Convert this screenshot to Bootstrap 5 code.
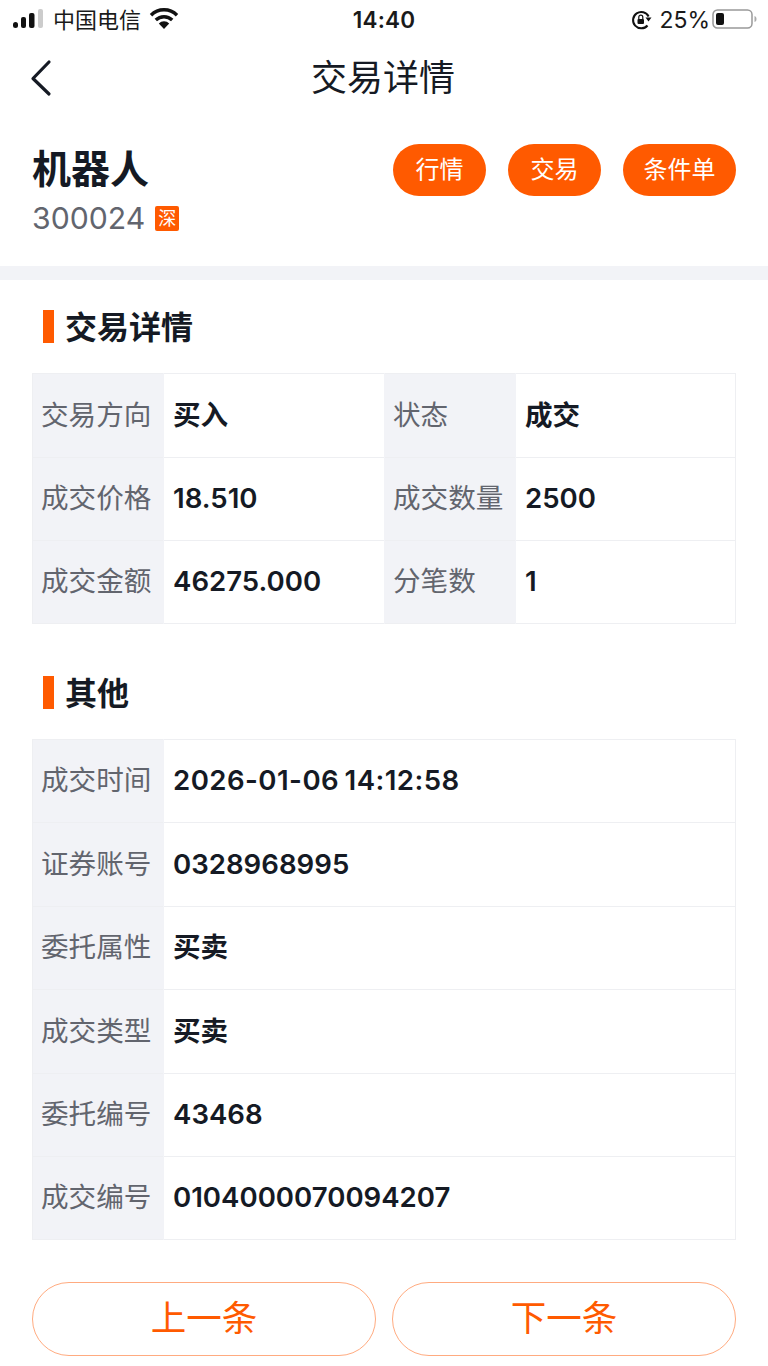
<!DOCTYPE html>
<html lang="zh-CN">
<head>
    <meta charset="UTF-8">
    <meta name="viewport" content="width=device-width, initial-scale=1.0">
    <title>交易详情</title>
    <link href="https://cdn.jsdelivr.net/npm/bootstrap@5.3.0/dist/css/bootstrap.min.css" rel="stylesheet">
    <style>
        body {
            font-family: "Inter", "Noto Sans CJK SC", sans-serif;
            background-color: #fff;
            color: #151a24;
            width: 768px;
            height: 1366px;
            overflow: hidden;
        }
        .status-bar { height: 40px; padding: 0 11px 0 13px; font-size: 22px; color: #1a1a1a; }
        .status-side { width: 260px; }
        .status-time { font-size: 22.5px; font-weight: 600; letter-spacing: .2px; margin-right: 2px; }
        .status-pct { font-size: 23px; margin-left: 7px; margin-right: 2px; }
        .status-up { margin-bottom: 3px; }
        .top-nav { height: 76px; }
        .top-title { font-size: 36px; line-height: 76px; font-weight: 400; margin: 0; padding-right: 2px; }
        .back-btn { left: 29px; top: 19px; }
        .stock-head { height: 150px; padding: 24px 32px 0 32px; }
        .stock-name { font-size: 39px; font-weight: 700; line-height: 58px; margin: 0; }
        .stock-code { font-size: 30.2px; line-height: 40px; color: #62656e; }
        .market-tag { width: 24px; height: 25px; background: #ff5a00; color: #fff; font-size: 18px; line-height: 25px; border-radius: 2px; text-align: center; margin-left: 10px; }
        .pill-btn { height: 52px; width: 93px; padding: 0; border-radius: 26px; background: #ff5a00; border: 0; color: #fff; font-size: 24px; }
        .pill-btn.wide { width: 113px; }
        .pill-row { gap: 22px; }
        .band { height: 14px; background: #f2f3f7; }
        .sec-title { height: 33px; padding-left: 43px; gap: 11px; font-size: 32px; font-weight: 700; line-height: 33px; margin: 0; }
        .sec-title > span:last-child { padding-top: 2px; }
        .sec-mark { width: 11px; height: 33px; background: #ff5a00; }
        .info-table { width: 704px; margin: 30px 0 0 32px; table-layout: fixed; border-color: #eeeff2; }
        .info-table td, .info-table th { height: 83px; padding: 0 9px; vertical-align: middle; font-size: 27.6px; }
        .info-table .row-tall > * { height: 84px; }
        .info-table th { background: #f2f3f7; color: #62656e; font-weight: 400; white-space: nowrap; padding-left: 8px; border-right-color: #f2f3f7; }
        .info-table td { font-weight: 600; color: #151a24; }
        .info-table th + td { border-left-color: #f2f3f7; }
        .info-table td:has(+ th) { border-right-color: #f2f3f7; }
        .info-table td + th { border-left-color: #f2f3f7; }
        .info-table .stamp { word-spacing: -2px; letter-spacing: .45px; }
        .w-lead { width: 131px; }
        .w-value { width: 221px; }
        .w-label { width: 131px; }
        .first-sec { margin-top: 30px; }
        .second-sec { margin-top: 52px; }
        .foot-btns { padding: 0 32px; margin-top: 42px; gap: 16px; }
        .foot-btn { flex: 1; height: 74px; padding: 0; border-radius: 37px; border: 1.5px solid #ffab80; background: #fff; color: #ff5a00; font-size: 35.5px; line-height: 1; }
    </style>
</head>
<body>
<div class="status-bar d-flex align-items-center justify-content-between">
    <div class="status-side d-flex align-items-center">
        <svg class="status-up" width="32" height="19" viewBox="0 0 32 19"><rect x="0" y="13" width="5" height="6" rx="2.5" fill="#111"/><rect x="8" y="8" width="5" height="11" rx="2" fill="#111"/><rect x="16" y="4" width="5.500" height="15" rx="2" fill="#111"/><rect x="25" y="0" width="5" height="19" rx="2" fill="#ccc"/></svg>
        <span class="ms-2">中国电信</span>
        <svg class="ms-2 status-up" width="30" height="22" viewBox="0 0 30 22"><path d="M15 21 9.800 15.400a7.400 7.400 0 0 1 10.400 0Z" fill="#111"/><path d="M6.800 12a11.800 11.800 0 0 1 16.400 0" fill="none" stroke="#111" stroke-width="3.400"/><path d="M2 7.200a18.200 18.200 0 0 1 26 0" fill="none" stroke="#111" stroke-width="3.400"/></svg>
    </div>
    <div class="status-time">14:40</div>
    <div class="status-side d-flex align-items-center justify-content-end">
        <svg width="22" height="22" viewBox="0 0 22 22"><path d="M17.5 16.500A8.200 8.200 0 1 1 18.600 7.500" fill="none" stroke="#111" stroke-width="2"/><path d="M15.500 8.500h6l-3 4Z" fill="#111"/><rect x="7.500" y="10" width="6.500" height="5" rx="1" fill="#111"/><path d="M8.800 10V8.200a2 2 0 0 1 4 0V10" fill="none" stroke="#111" stroke-width="1.200"/></svg>
        <span class="status-pct">25%</span>
        <svg class="status-up" width="45" height="20" viewBox="0 0 45 20"><rect x="1" y="1" width="39" height="18" rx="4.500" fill="#fff" stroke="#999" stroke-width="1.500"/><rect x="4" y="4" width="8" height="12" rx="2" fill="#111"/><path d="M42.500 7c1.500.5 2 1.500 2 3s-.5 2.500-2 3Z" fill="#aaa"/></svg>
    </div>
</div>

<nav class="top-nav position-relative text-center">
    <a class="back-btn position-absolute" href="#" aria-label="返回">
        <svg class="d-block" width="24" height="38" viewBox="0 0 24 38"><path d="M20 3 4 19.500 20 35" fill="none" stroke="#151a24" stroke-width="3.200" stroke-linecap="round" stroke-linejoin="round"/></svg>
    </a>
    <h1 class="top-title">交易详情</h1>
</nav>

<section class="stock-head d-flex justify-content-between align-items-start">
    <div>
        <h2 class="stock-name">机器人</h2>
        <div class="stock-code d-flex align-items-center">300024<span class="market-tag">深</span></div>
    </div>
    <div class="pill-row d-flex mt-1">
        <button type="button" class="btn pill-btn">行情</button>
        <button type="button" class="btn pill-btn">交易</button>
        <button type="button" class="btn pill-btn wide">条件单</button>
    </div>
</section>
<div class="band"></div>

<h3 class="sec-title first-sec d-flex align-items-center"><span class="sec-mark"></span><span>交易详情</span></h3>
<table class="table table-bordered info-table">
    <colgroup><col class="w-lead"><col class="w-value"><col class="w-label"><col></colgroup>
    <tbody>
        <tr class="row-tall"><th>交易方向</th><td>买入</td><th>状态</th><td>成交</td></tr>
        <tr><th>成交价格</th><td>18.510</td><th>成交数量</th><td>2500</td></tr>
        <tr><th>成交金额</th><td>46275.000</td><th>分笔数</th><td>1</td></tr>
    </tbody>
</table>

<h3 class="sec-title second-sec d-flex align-items-center"><span class="sec-mark"></span><span>其他</span></h3>
<table class="table table-bordered info-table">
    <colgroup><col class="w-lead"><col></colgroup>
    <tbody>
        <tr><th>成交时间</th><td class="stamp">2026-01-06 14:12:58</td></tr>
        <tr class="row-tall"><th>证券账号</th><td>0328968995</td></tr>
        <tr><th>委托属性</th><td>买卖</td></tr>
        <tr class="row-tall"><th>成交类型</th><td>买卖</td></tr>
        <tr><th>委托编号</th><td>43468</td></tr>
        <tr><th>成交编号</th><td>0104000070094207</td></tr>
    </tbody>
</table>

<div class="foot-btns d-flex">
    <button type="button" class="btn foot-btn">上一条</button>
    <button type="button" class="btn foot-btn">下一条</button>
</div>

<script src="https://cdn.jsdelivr.net/npm/bootstrap@5.3.0/dist/js/bootstrap.bundle.min.js"></script>
</body>
</html>
